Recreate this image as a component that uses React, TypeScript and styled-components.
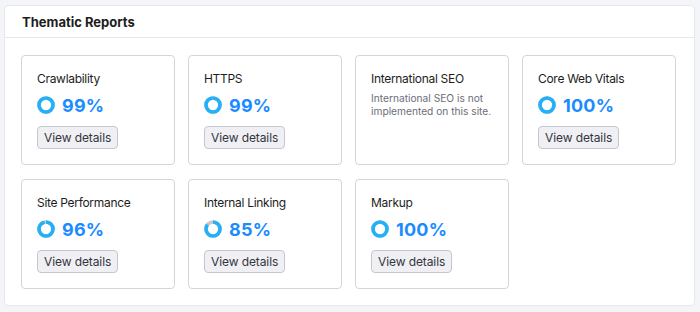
import React from 'react';
import styled, { createGlobalStyle } from 'styled-components';

const Global = createGlobalStyle`
  html, body {
    margin: 0;
    padding: 0;
    background: #f4f5f9;
    font-family: Inter, "Noto Sans", Arial, sans-serif;
    -webkit-font-smoothing: antialiased;
  }
`

const Page = styled.div`
  padding: 6px 6px 7px 5px;
`

const Panel = styled.section`
  background: #ffffff;
  border-radius: 4px;
  box-shadow: 0 0 0 1px #e6e7ec;
`

const Header = styled.div`
  height: 31px;
  display: flex;
  align-items: center;
  padding: 0 17px;
  border-bottom: 1px solid #e6e7ee;
  h2 {
    margin: 0;
    font-size: 13px;
    font-weight: 700;
    color: #1c1d21;
  }
`

const Grid = styled.div`
  display: grid;
  grid-template-columns: repeat(4, 154px);
  column-gap: 13px;
  row-gap: 14px;
  padding: 17px 16px 16px 16px;
`

const Card = styled.div`
  height: 110px;
  box-sizing: border-box;
  border: 1px solid #d3d5dc;
  border-radius: 4px;
  padding: 15px 15px 0 15px;
  display: flex;
  flex-direction: column;
`

const Title = styled.div`
  font-size: 12px;
  line-height: 16px;
  letter-spacing: -0.3px;
  color: #1c1d21;
`

const Score = styled.div`
  display: flex;
  align-items: center;
  gap: 7px;
  margin-top: 7px;
  height: 22px;
  span {
    font-size: 18px;
    font-weight: 700;
    color: #1a8cff;
    letter-spacing: 0.2px;
  }
`

const Note = styled.p`
  margin: 5px 0 0;
  font-size: 10.2px;
  line-height: 13px;
  color: #6c6e79;
`

const Button = styled.button`
  margin-top: 10px;
  align-self: flex-start;
  height: 23px;
  padding: 0 6px;
  border: 1px solid #c4c7cf;
  border-radius: 4px;
  background: #f0f0f4;
  font-family: Inter, "Noto Sans", Arial, sans-serif;
  font-size: 12px;
  letter-spacing: -0.1px;
  color: #333540;
  cursor: pointer;
`

const Ring = ({ value }: { value: number }) => {
  const r = 7;
  const c = 2 * Math.PI * r;
  const filled = (c * value) / 100;
  return (
    <svg width="18" height="18" viewBox="0 0 18 18">
      <circle cx="9" cy="9" r={r} fill="none" stroke="#c7c8ce" strokeWidth="3.6" />
      <circle
        cx="9" cy="9" r={r} fill="none" stroke="#22b0f8" strokeWidth="3.6"
        strokeDasharray={`${filled} ${c}`}
        transform="rotate(-90 9 9)"
      />
    </svg>
  )
}

const reports = [
  { title: 'Crawlability', value: 99 },
  { title: 'HTTPS', value: 99 },
  { title: 'International SEO', note: 'International SEO is not implemented on this site.' },
  { title: 'Core Web Vitals', value: 100 },
  { title: 'Site Performance', value: 96 },
  { title: 'Internal Linking', value: 85 },
  { title: 'Markup', value: 100 },
]

export default function App() {
  return (
    <Page>
      <Global />
      <Panel>
        <Header><h2>Thematic Reports</h2></Header>
        <Grid>
          {reports.map((item, index) =>
            <Card key={index}>
              <Title>{item.title}</Title>
              {item.note
                ? <Note>{item.note}</Note>
                : <>
                    <Score>
                      <Ring value={item.value as number} />
                      <span>{item.value}%</span>
                    </Score>
                    <Button>View details</Button>
                  </>
              }
            </Card>
          )}
        </Grid>
      </Panel>
    </Page>
  )
}
